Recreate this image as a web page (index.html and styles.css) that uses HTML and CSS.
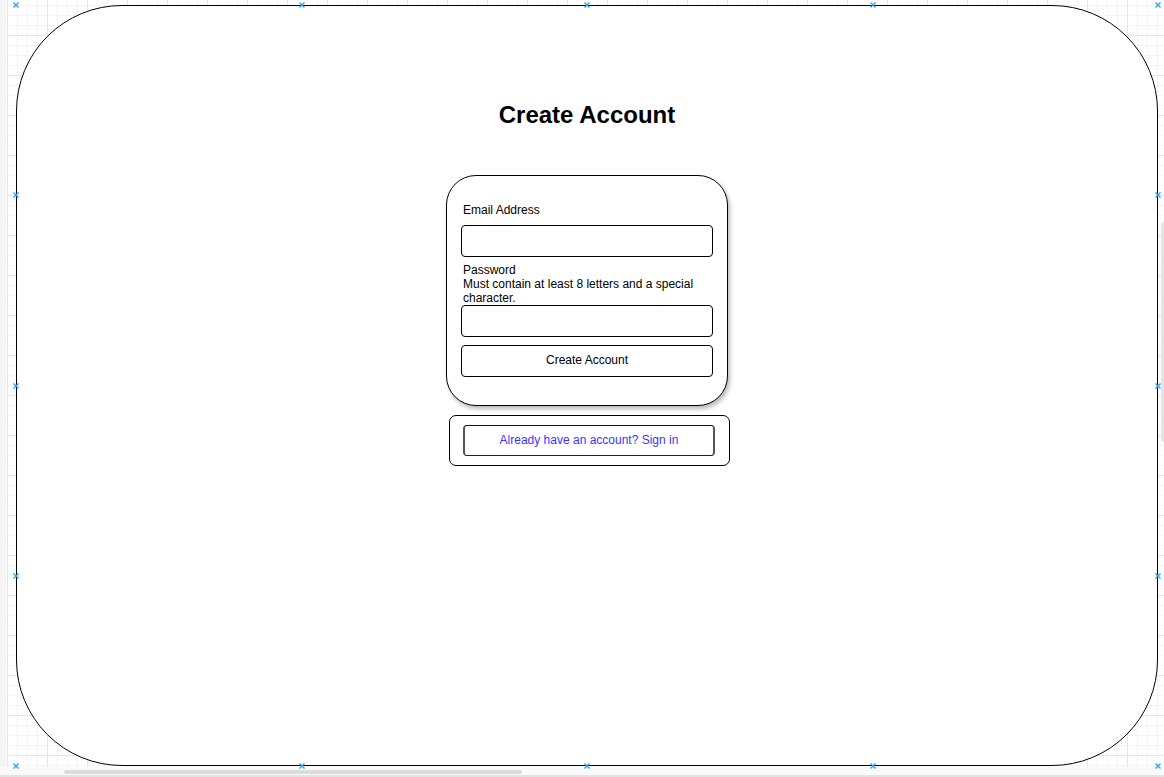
FILE: index.html
```html
<!DOCTYPE html>
<html lang="en">
<head>
<meta charset="utf-8">
<title>Create Account</title>
<link rel="stylesheet" href="styles.css">
</head>
<body>
<div class="workspace">
  <div class="page">
    <div class="handles">
      <svg class="handle h-t0" viewBox="0 0 7 7"><path d="M1 1L6 6M6 1L1 6"/></svg>
      <svg class="handle h-t1" viewBox="0 0 7 7"><path d="M1 1L6 6M6 1L1 6"/></svg>
      <svg class="handle h-t2" viewBox="0 0 7 7"><path d="M1 1L6 6M6 1L1 6"/></svg>
      <svg class="handle h-t3" viewBox="0 0 7 7"><path d="M1 1L6 6M6 1L1 6"/></svg>
      <svg class="handle h-t4" viewBox="0 0 7 7"><path d="M1 1L6 6M6 1L1 6"/></svg>
      <svg class="handle h-l1" viewBox="0 0 7 7"><path d="M1 1L6 6M6 1L1 6"/></svg>
      <svg class="handle h-l2" viewBox="0 0 7 7"><path d="M1 1L6 6M6 1L1 6"/></svg>
      <svg class="handle h-l3" viewBox="0 0 7 7"><path d="M1 1L6 6M6 1L1 6"/></svg>
      <svg class="handle h-r1" viewBox="0 0 7 7"><path d="M1 1L6 6M6 1L1 6"/></svg>
      <svg class="handle h-r2" viewBox="0 0 7 7"><path d="M1 1L6 6M6 1L1 6"/></svg>
      <svg class="handle h-r3" viewBox="0 0 7 7"><path d="M1 1L6 6M6 1L1 6"/></svg>
      <svg class="handle h-b0" viewBox="0 0 7 7"><path d="M1 1L6 6M6 1L1 6"/></svg>
      <svg class="handle h-b1" viewBox="0 0 7 7"><path d="M1 1L6 6M6 1L1 6"/></svg>
      <svg class="handle h-b2" viewBox="0 0 7 7"><path d="M1 1L6 6M6 1L1 6"/></svg>
      <svg class="handle h-b3" viewBox="0 0 7 7"><path d="M1 1L6 6M6 1L1 6"/></svg>
      <svg class="handle h-b4" viewBox="0 0 7 7"><path d="M1 1L6 6M6 1L1 6"/></svg>
    </div>

    <h1 class="title">Create Account</h1>

    <div class="card">
      <div class="label">Email Address</div>
      <div class="field field-email"></div>
      <div class="label label-pass">Password<br>Must contain at least 8 letters and a special character.</div>
      <div class="field field-pass"></div>
      <div class="btn">Create Account</div>
    </div>

    <div class="linkbox">
      <div class="linkbtn">Already have an account? Sign in</div>
    </div>
  </div>
  <div class="vscroll"></div>
</div>
<div class="hscroll"><div class="hthumb"></div></div>
</body>
</html>
```
FILE: styles.css
```css
html, body {
  margin: 0;
  padding: 0;
}
body {
  width: 1164px;
  height: 777px;
  overflow: hidden;
  background: #fff;
  font-family: "Liberation Sans", Arial, Helvetica, sans-serif;
  color: #000;
}
.workspace {
  position: relative;
  box-sizing: border-box;
  height: 767px;
  padding: 5px 0 0 10px;
  border-left: 6px solid #f5f5f5;
  background-color: #fff;
  background-image:
    linear-gradient(#e6e6e6 1px, transparent 1px),
    linear-gradient(90deg, #e6e6e6 1px, transparent 1px),
    linear-gradient(#f4f4f4 1px, transparent 1px),
    linear-gradient(90deg, #f4f4f4 1px, transparent 1px);
  background-size: 40px 40px, 40px 40px, 10px 10px, 10px 10px;
  background-position: 0 35px, 7px 0, 0 5px, 7px 0;
  background-origin: border-box;
  background-clip: padding-box;
}
.page {
  position: relative;
  box-sizing: border-box;
  width: 1142px;
  height: 761px;
  border: 1px solid #000;
  border-radius: 106px;
  background: #fff;
  display: flex;
  flex-direction: column;
  align-items: center;
  padding-top: 95px;
}
.handles {
  position: absolute;
  inset: -1px;
  pointer-events: none;
}
.handle {
  position: absolute;
  width: 7px;
  height: 7px;
  transform: translate(-50%, -50%);
  fill: none;
  stroke: #2aa4ee;
  stroke-width: 1.4;
}
.h-t0 { left: 0; top: 0; }
.h-t1 { left: 25%; top: 0; }
.h-t2 { left: 50%; top: 0; }
.h-t3 { left: 75%; top: 0; }
.h-t4 { left: 100%; top: 0; }
.h-l1 { left: 0; top: 25%; }
.h-l2 { left: 0; top: 50%; }
.h-l3 { left: 0; top: 75%; }
.h-r1 { left: 100%; top: 25%; }
.h-r2 { left: 100%; top: 50%; }
.h-r3 { left: 100%; top: 75%; }
.h-b0 { left: 0; top: 100%; }
.h-b1 { left: 25%; top: 100%; }
.h-b2 { left: 50%; top: 100%; }
.h-b3 { left: 75%; top: 100%; }
.h-b4 { left: 100%; top: 100%; }

.title {
  margin: 0;
  font-size: 24px;
  line-height: 28px;
  font-weight: bold;
}
.card {
  box-sizing: border-box;
  width: 282px;
  margin-top: 46px;
  border: 1px solid #000;
  border-radius: 30px;
  padding: 27px 14px 28px;
  background: #fff;
  box-shadow: 2px 3px 4px rgba(0, 0, 0, 0.28);
  display: flex;
  flex-direction: column;
}
.label {
  font-size: 12px;
  line-height: 14px;
  padding-left: 2px;
}
.label-pass {
  margin-top: 6px;
  padding-right: 4px;
}
.field {
  box-sizing: border-box;
  height: 32px;
  border: 1px solid #000;
  border-radius: 4px;
  background: #fff;
}
.field-email {
  margin-top: 8px;
}
.field-pass {
  margin-top: 0;
}
.btn {
  box-sizing: border-box;
  height: 32px;
  margin-top: 8px;
  padding-bottom: 2px;
  border: 1px solid #000;
  border-radius: 4px;
  display: flex;
  align-items: center;
  justify-content: center;
  font-size: 12px;
  line-height: 14px;
}
.linkbox {
  box-sizing: border-box;
  width: 281px;
  height: 51px;
  margin-top: 9px;
  margin-left: 5px;
  border: 1px solid #000;
  border-radius: 7px;
  padding: 9px 0 0 13px;
  background: #fff;
}
.linkbtn {
  box-sizing: border-box;
  width: 252px;
  height: 31px;
  padding-bottom: 1px;
  border-top: 1px solid #111;
  border-bottom: 1px solid #222;
  border-left: 2px solid #555;
  border-right: 2px solid #555;
  border-radius: 4px;
  display: flex;
  align-items: center;
  justify-content: center;
  font-size: 12px;
  line-height: 14px;
  color: #3d33ff;
}
.vscroll {
  position: absolute;
  right: 0;
  top: 222px;
  width: 3px;
  height: 220px;
  background: #e6e6e6;
  border-radius: 2px;
}
.hscroll {
  box-sizing: border-box;
  height: 10px;
  padding-top: 3px;
  background: #fafafa;
  border-bottom: 2px solid #e3e3e3;
}
.hthumb {
  width: 458px;
  height: 4px;
  margin-left: 64px;
  border-radius: 2px;
  background: #dcdcdc;
}
```
